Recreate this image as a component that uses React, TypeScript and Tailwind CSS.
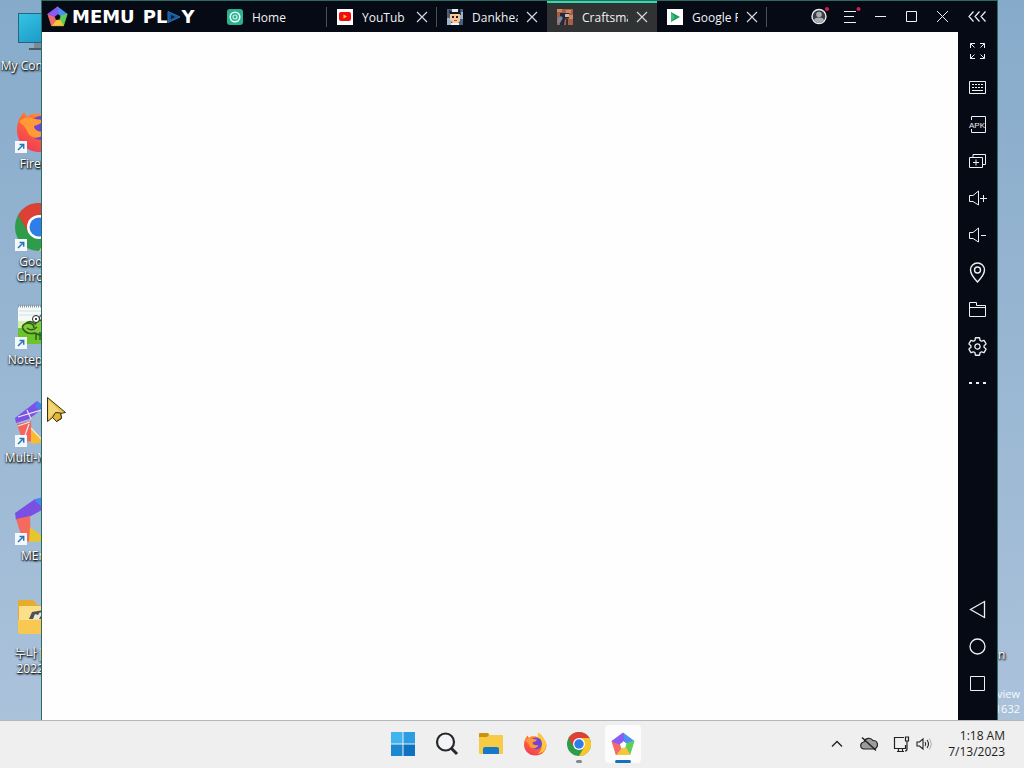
import type { ReactNode } from 'react';
import { IoSettingsOutline } from 'react-icons/io5';

const BLADES = [
  { points: '12,1 23,9.2 16,11.3 12.6,8.8', color: '#4a90f5' },
  { points: '23,9.2 18.8,22.5 14.8,16 16,11.3', color: '#5fcf5a' },
  { points: '18.8,22.5 5.2,22.5 9.8,16.6 14.8,16', color: '#f5c53c' },
  { points: '5.2,22.5 1,9.2 8.4,12 9.8,16.6', color: '#f26a6a' },
  { points: '1,9.2 12,1 12.6,8.8 8.4,12', color: '#8a5cf0' },
];

function MemuMark({ className }: { className: string }) {
  return (
    <svg viewBox="0 0 24 24" className={className} aria-hidden="true">
      {BLADES.map((b) => (
        <polygon key={b.color} points={b.points} fill={b.color} stroke={b.color} strokeWidth="1" strokeLinejoin="round" />
      ))}
    </svg>
  );
}

function ChromeMark({ className }: { className: string }) {
  return (
    <svg viewBox="0 0 48 48" className={className} aria-hidden="true">
      <circle cx="24" cy="24" r="24" fill="#2e9c4b" />
      <path d="M3.2 12A24 24 0 0 1 44.8 12H24L13.6 30Z" fill="#dd4034" />
      <path d="M44.8 12A24 24 0 0 1 24 48L34.4 30L24 12Z" fill="#fbc52c" />
      <circle cx="24" cy="24" r="12" fill="#fff" />
      <circle cx="24" cy="24" r="9.5" fill="#2f7de9" />
    </svg>
  );
}

function FirefoxMark({ className }: { className: string }) {
  return (
    <svg viewBox="0 0 48 48" className={className} aria-hidden="true">
      <defs>
        <linearGradient id="fox" x1="0.8" y1="0" x2="0.2" y2="1">
          <stop offset="0" stopColor="#ffb02e" />
          <stop offset="0.5" stopColor="#ff6a36" />
          <stop offset="1" stopColor="#f0355a" />
        </linearGradient>
      </defs>
      <path d="M30 1C37 6 40 10 42 15C45 18 47 22 47 27C46 39 37 47 25 47C11 47 2 37 2 25C2 17 5 12 9 7L12 12C15 9 18 8 21 9C24 8 28 9 32 12Z" fill="url(#fox)" />
      <path d="M30 1C37 6 40 10 42 15C46 19 47 24 46 29C44 39 36 43 30 43C38 37 40 27 34 18C31 13 28 8 30 1Z" fill="#ffc83a" />
      <circle cx="26" cy="23" r="12" fill="#7044d6" />
      <path d="M4 17C8 11 16 12 20 14L28 15C27 19 22 20 19 21C19 25 24 28 31 26C28 34 17 35 13 28C11 22 8 20 4 17Z" fill="#ff9a36" />
    </svg>
  );
}

function MonitorArt() {
  return (
    <svg viewBox="0 0 48 48" className="size-12" aria-hidden="true">
      <defs>
        <linearGradient id="screen" x1="0" y1="0" x2="1" y2="1">
          <stop offset="0" stopColor="#35c5e4" />
          <stop offset="1" stopColor="#168cc0" />
        </linearGradient>
      </defs>
      <rect x="3.5" y="6.5" width="42" height="29" fill="url(#screen)" stroke="#29637c" />
      <path d="M19 36h10v5H19z" fill="#7b8c98" />
      <path d="M14 41h20v2H14z" fill="#4a5a66" />
    </svg>
  );
}

function NotepadArt() {
  return (
    <svg viewBox="0 0 48 48" className="size-12" aria-hidden="true">
      <path d="M3 5h42v38H3z" fill="#f6faf6" />
      <path d="M3 27h42v16H3z" fill="#6dc42a" />
      <path d="M3 20h42v7H3z" fill="#d5edae" />
      <path d="M3 5h42" stroke="#8a9aa5" strokeWidth="3" strokeDasharray="1 1" />
      <path d="M4 10h40M4 14h40" stroke="#cfe0ea" />
      <path d="M10 23q5-5 10 0q4-6 12-4q10 4 5 12q-8 6-17 1q-8 2-12-4q-2-4 4-6q7 0 7 5" fill="#86c937" stroke="#2b5e1c" strokeWidth="1.6" />
      <path d="M12 27q5 4 10-1" fill="none" stroke="#2b5e1c" strokeWidth="1.4" />
      <circle cx="21" cy="18" r="3.5" fill="#fff" stroke="#222" />
      <circle cx="28" cy="17" r="3.5" fill="#fff" stroke="#222" />
      <circle cx="21" cy="18" r="1" />
      <circle cx="28" cy="17" r="1" />
      <path d="M21 32v7M25 31v8" stroke="#246418" strokeWidth="1.5" />
    </svg>
  );
}

function MultiArt() {
  return (
    <svg viewBox="0 0 48 48" className="size-12" aria-hidden="true">
      <path d="M0 19L22 2L27 10L14 20L1 24Z" fill="#7d50e6" />
      <path d="M22 2L46 18L38 20L20 8Z" fill="#4a7df0" />
      <path d="M2 25L16 22L17 42L8 43Z" fill="#f4645d" />
      <path d="M16 29L32 43L16 45Z" fill="#f7bd30" />
      <path d="M38 20L46 20L38 44L30 42Z" fill="#57c769" />
      <path d="M3 18L26 11M12 11l4 9M3 27l12-4M8 42l6-17M16 29l13 14" stroke="#e9eaf5" strokeWidth="1.2" />
    </svg>
  );
}

function MemuArt() {
  return (
    <svg viewBox="0 0 48 48" className="size-12" aria-hidden="true">
      <path d="M0 16L20 2L27 1L27 13L14 20L1 23Z" fill="#7a4fe4" />
      <path d="M19 3L27 0L47 17L38 20L26 9Z" fill="#3f8df4" />
      <path d="M1 22L15 19L16 45L8 44Z" fill="#f56a5f" />
      <path d="M15 30L34 44L14 45Z" fill="#e6c62f" />
      <path d="M38 20L47 18L39 44L30 42Z" fill="#57c769" />
    </svg>
  );
}

function FolderArt() {
  return (
    <svg viewBox="0 0 48 48" className="size-12" aria-hidden="true">
      <path d="M3 7q0-2 2-2h13l4 5h21v27H3z" fill="#e9ab2b" />
      <path d="M4 11h40v18H4z" fill="#fbe08c" />
      <path d="M3 25h41v12q0 2-2 2H5q-2 0-2-2z" fill="#f8c853" />
      <path d="M14 24l3-7 12-2v9H14z" fill="#50504e" />
      <path d="M18 24l2-5 3 1 2-3 2 2-3 5z" fill="#e8e6e0" />
    </svg>
  );
}

const SHORTCUTS: { label: string; art: ReactNode; link: boolean }[] = [
  { label: 'My Computer', art: <MonitorArt />, link: false },
  { label: 'Firefox', art: <FirefoxMark className="size-12" />, link: true },
  { label: 'Google\nChrome', art: <ChromeMark className="size-12" />, link: true },
  { label: 'Notepad++', art: <NotepadArt />, link: true },
  { label: 'Multi-MEmu', art: <MultiArt />, link: true },
  { label: 'MEmu', art: <MemuArt />, link: true },
  { label: '누나|U나\n2022-12', art: <FolderArt />, link: false },
];

function Shortcut({ label, art, link }: { label: string; art: ReactNode; link: boolean }) {
  return (
    <button type="button" className="flex h-[98px] w-[78px] shrink-0 flex-col items-center gap-[3px] pt-[7px]">
      <span className="relative size-12">
        {art}
        {link && (
          <svg viewBox="0 0 12 12" className="absolute bottom-0 left-0 size-3" aria-hidden="true">
            <path d="M0 0h12v12H0z" fill="#f4f8fb" />
            <path d="M3 9L8.500 3.500M4.500 3.500h4.200v4.200" fill="none" stroke="#2277b8" strokeWidth="1.500" />
          </svg>
        )}
      </span>
      <span className="text-center text-[12px] leading-[15px] whitespace-pre text-white [text-shadow:1px_1px_2px_#000,0_1px_2px_#000]">
        {label}
      </span>
    </button>
  );
}

const HomeIcon = (
  <svg viewBox="0 0 16 16" className="size-4 shrink-0" aria-hidden="true">
    <rect width="16" height="16" rx="3" fill="#2bb191" />
    <circle cx="8" cy="8" r="4.800" fill="none" stroke="#e9fff8" strokeWidth="1.600" />
    <circle cx="8" cy="8" r="2" fill="none" stroke="#c9f5e8" strokeWidth="1.200" />
  </svg>
);

const YouTubeIcon = (
  <svg viewBox="0 0 16 16" className="size-4 shrink-0" aria-hidden="true">
    <rect width="16" height="16" fill="#fff" />
    <rect x="2" y="3" width="12" height="9" rx="2" fill="#f30d0d" />
    <path d="M6.500 5.500v4l3.500-2z" fill="#ffd23a" />
  </svg>
);

const DankIcon = (
  <svg viewBox="0 0 16 16" className="size-4 shrink-0" aria-hidden="true">
    <rect width="16" height="16" fill="#47617f" />
    <path d="M0 9h4v7H0zM13 3h3v7h-3z" fill="#9db4c9" />
    <path d="M2 1l3 2 8-3 1 6H3z" fill="#141a22" />
    <path d="M5 0h6v3H5z" fill="#e8edf2" />
    <path d="M3 5h10v7l-3 3H7l-4-4z" fill="#f5c79a" />
    <path d="M5 7h2v2H5zM9 7h2v2H9z" fill="#2b1a14" />
    <path d="M7 11h3v1H7z" fill="#b24a3a" />
    <path d="M4 14h8v2H4z" fill="#f2f4f6" />
  </svg>
);

const CraftIcon = (
  <svg viewBox="0 0 16 16" className="size-4 shrink-0" aria-hidden="true">
    <rect width="16" height="16" fill="#a5604a" />
    <path d="M0 0h5v3H0zM9 1h5v3H9zM12 6h4v4h-4z" fill="#d08763" />
    <path d="M3 4h9v5l-4 1-1 6H3z" fill="#272936" />
    <path d="M1 9l3-2 2 2-3 5H0z" fill="#7288a5" />
    <path d="M8 5h4v3H8z" fill="#c9bcb5" />
    <path d="M9 10h2v6H9z" fill="#3b2c30" />
  </svg>
);

const PlayIcon = (
  <svg viewBox="0 0 16 16" className="size-4 shrink-0" aria-hidden="true">
    <rect width="16" height="16" fill="#fff" />
    <path d="M4 3v10l9-5z" fill="#1f9d5c" />
    <path d="M4 3v10l4-5z" fill="#35bd82" />
  </svg>
);

const TABS = [
  { title: 'Home', icon: HomeIcon, active: false, closable: false, rule: true },
  { title: 'YouTub', icon: YouTubeIcon, active: false, closable: true, rule: true },
  { title: 'Dankheads', icon: DankIcon, active: false, closable: true, rule: false },
  { title: 'Craftsman', icon: CraftIcon, active: true, closable: true, rule: false },
  { title: 'Google Play', icon: PlayIcon, active: false, closable: true, rule: true },
];

function Tab({ tab }: { tab: (typeof TABS)[number] }) {
  return (
    <div className={tab.active ? 'flex w-[110px] items-center border-t-2 border-[#35dba6] bg-[#303234] pb-px' : 'flex w-[110px] items-center pt-px'}>
      <button type="button" className="flex h-full flex-1 items-center gap-[9px] pl-[10px]">
        {tab.icon}
        <span className="w-[46px] overflow-hidden pt-0.5 text-left text-[12px] leading-4 whitespace-nowrap text-[#f0f2f4]">{tab.title}</span>
      </button>
      {tab.closable && (
        <button type="button" aria-label={`Close ${tab.title}`} className="mr-2 shrink-0">
          <svg viewBox="0 0 12 12" className="size-3" stroke="#d5d8dc" strokeWidth="1.200">
            <path d="M1 1l10 10M11 1L1 11" />
          </svg>
        </button>
      )}
      <span className={tab.rule ? 'h-5 w-px bg-[#4a4e55]' : 'h-5 w-px'} />
    </div>
  );
}

const CAPTION = [
  {
    name: 'Account',
    icon: (
      <>
        <circle cx="11" cy="10.500" r="7" fill="#3a3f46" stroke="#eceef0" strokeWidth="1.400" />
        <circle cx="11" cy="8.500" r="2.800" fill="#a9adb2" stroke="none" />
        <path d="M6 14.500q0-3 5-3t5 3q-2 2.500-5 2.500T6 14.500z" fill="#a9adb2" stroke="none" />
        <circle cx="19" cy="3" r="2" fill="#d01c4e" stroke="none" />
      </>
    ),
  },
  {
    name: 'Menu',
    icon: (
      <>
        <path d="M5 5.500h12M5 10.500h10M5 16.500h12" />
        <circle cx="19.500" cy="3" r="2" fill="#d01c4e" stroke="none" />
      </>
    ),
  },
  { name: 'Minimize', icon: <path d="M5 10.500h11" /> },
  { name: 'Maximize', icon: <path d="M5.500 5.500h10v10h-10z" /> },
  { name: 'Close', icon: <path d="M5 5l11 11M16 5L5 16" /> },
];

const TOOLS = [
  { name: 'Full screen', icon: <path d="M3.500 8V3.500H8M3.500 3.500l4 4M13 3.500h4.500V8M17.500 3.500l-4 4M3.500 14v4.500H8M3.500 18.500l4-4M13 18.500h4.500V14M17.500 18.500l-4-4" /> },
  {
    name: 'Keyboard',
    icon: (
      <>
        <path d="M2.500 4.500h16v12h-16zM5 13.500h11" />
        <path d="M5 7.500h11M5 10.500h11" strokeDasharray="2 1" />
      </>
    ),
  },
  {
    name: 'Install APK',
    icon: (
      <>
        <path d="M4.500 6V2.500h14v16h-14V15" />
        <text x="2" y="14" fontSize="8" fill="#eef0f2" stroke="none" className="font-['Liberation_Sans',sans-serif]">APK</text>
      </>
    ),
  },
  { name: 'Multi instance', icon: <path d="M2.500 6.500h13v10h-13zM6 6V3.500h12.500v10H16M9 8.500v6M6 11.500h6" /> },
  { name: 'Volume up', icon: <path d="M2.500 7.500H6l5.500-4.500v14L6 13.500H2.500zM13 10.500h7M16.500 7v7" /> },
  { name: 'Volume down', icon: <path d="M2.500 7.500H6l5.500-4.500v14L6 13.500H2.500zM14 10.500h5" /> },
  {
    name: 'Location',
    icon: (
      <>
        <path d="M10.500 20Q3.500 12.500 3.500 8A7 7 0 0 1 17.500 8Q17.500 12.500 10.500 20z" strokeWidth="1.400" />
        <circle cx="10.500" cy="8" r="3" strokeWidth="1.400" />
      </>
    ),
  },
  { name: 'Shared folder', icon: <path d="M2.500 17.500v-14h7v3h9v11zM2.500 8.500h16" /> },
  { name: 'Settings', icon: <IoSettingsOutline size={21} /> },
  { name: 'More', icon: <path d="M2 10h3M9 10h3M16 10h3" strokeWidth="2" /> },
];

const NAV = [
  { name: 'Back', icon: <path d="M17.500 2.500v16L3.500 10.500z" strokeWidth="1.300" /> },
  { name: 'Home screen', icon: <circle cx="10.500" cy="10.500" r="7.500" strokeWidth="1.300" /> },
  { name: 'Recent apps', icon: <path d="M3.500 3.500h14v14h-14z" /> },
];

function ToolButton({ name, icon }: { name: string; icon: ReactNode }) {
  return (
    <button type="button" aria-label={name} className="flex h-[37px] w-full items-center justify-center text-[#eef0f2]">
      <svg viewBox="0 0 21 21" className="size-[21px] overflow-visible" fill="none" stroke="currentColor" strokeWidth="1">
        {icon}
      </svg>
    </button>
  );
}

function EmulatorWindow() {
  return (
    <main className="flex min-w-0 flex-1 flex-col border-x border-[#2c6b64] bg-[#060a14]">
      <header className="flex h-8 shrink-0 border-t border-[#2c6b64]">
        <div className="flex w-[175px] shrink-0 items-center pl-[5px] font-['DejaVu_Sans',sans-serif] text-[18px] leading-none font-bold text-white">
          <MemuMark className="mr-1 size-[21px] shrink-0" />
          <span className="mr-2">MEMU</span>
          <span>PL</span>
          <svg viewBox="0 0 14 12" className="h-3 w-[14px] shrink-0" aria-hidden="true">
            <path d="M1 0.500v11L13 6z" fill="#17599a" stroke="#2676b8" />
            <path d="M4 4v4l4-2z" fill="#0a1830" />
          </svg>
          <span>Y</span>
        </div>
        {TABS.map((t) => (
          <Tab key={t.title} tab={t} />
        ))}
        <div className="ml-auto flex">
          {CAPTION.map((c) => (
            <button key={c.name} type="button" aria-label={c.name} className="flex w-[31px] items-center justify-center">
              <svg viewBox="0 0 21 21" className="size-[21px] overflow-visible" fill="none" stroke="#eef0f2" strokeWidth="1">
                {c.icon}
              </svg>
            </button>
          ))}
          <button type="button" aria-label="Collapse toolbar" className="flex w-[39px] items-center justify-center">
            <svg viewBox="0 0 19 11" className="h-[11px] w-[19px]" fill="none" stroke="#eef0f2" strokeWidth="1.200">
              <path d="M5.500 0.500l-4.500 5 4.500 5M11.500 0.500l-4.500 5 4.500 5M17.500 0.500l-4.500 5 4.500 5" />
            </svg>
          </button>
        </div>
      </header>

      <div className="flex min-h-0 flex-1">
        {/* guest screen */}
        <section className="relative flex-1 bg-[#fefefe]">
          <svg viewBox="0 0 20 28" className="absolute top-[364px] left-1 h-7 w-5" aria-hidden="true">
            <path d="M1.500 1.500v24l5-4 4 4 5-3-1-5 5-1z" fill="#e9c146" stroke="#3b2f14" strokeLinejoin="round" />
            <path d="M2.500 4v19l4-5 8-2z" fill="#f3d67a" />
            <path d="M6.500 21.500l3-5 5 0.500 1 5-5 3.500z" fill="#e3b63a" stroke="#3b2f14" />
          </svg>
        </section>
        <nav className="flex w-[39px] shrink-0 flex-col justify-between pb-[18px]">
          <div>
            {TOOLS.map((t) => (
              <ToolButton key={t.name} {...t} />
            ))}
          </div>
          <div>
            {NAV.map((t) => (
              <ToolButton key={t.name} {...t} />
            ))}
          </div>
        </nav>
      </div>
    </main>
  );
}

const PINNED = [
  {
    name: 'Start',
    icon: (
      <svg viewBox="0 0 24 24" className="size-6" aria-hidden="true">
        <path d="M0 0h11.500v11.500H0z" fill="#3fb4ee" />
        <path d="M12.500 0H24v11.500H12.500z" fill="#2c9de0" />
        <path d="M0 12.500h11.500V24H0z" fill="#1b88d2" />
        <path d="M12.500 12.500H24V24H12.500z" fill="#0f72c0" />
      </svg>
    ),
    active: false,
    mark: '',
  },
  {
    name: 'Search',
    icon: (
      <svg viewBox="0 0 24 24" className="size-6" fill="none" stroke="#26282b" aria-hidden="true">
        <circle cx="10.500" cy="10" r="8.500" fill="#f3f5f8" strokeWidth="2.200" />
        <path d="M16.500 16.500l5.500 5.500" strokeWidth="3" />
      </svg>
    ),
    active: false,
    mark: '',
  },
  {
    name: 'File Explorer',
    icon: (
      <svg viewBox="0 0 24 24" className="size-6" aria-hidden="true">
        <path d="M0 2q0-1 1-1h8l2 2h12q1 0 1 1v17q0 1-1 1H1q-1 0-1-1z" fill="#f8cb45" />
        <path d="M0 2q0-1 1-1h8l1 2-2 2H0z" fill="#c9920f" />
        <path d="M4 22v-5q0-2 2-2h12q2 0 2 2v5z" fill="#1678c8" />
      </svg>
    ),
    active: false,
    mark: '',
  },
  { name: 'Firefox', icon: <FirefoxMark className="size-6" />, active: false, mark: '' },
  { name: 'Chrome', icon: <ChromeMark className="size-6" />, active: false, mark: 'h-[3px] w-[6px] rounded-full bg-[#85878a]' },
  { name: 'MEmu', icon: <MemuMark className="size-6" />, active: true, mark: 'h-[3px] w-4 rounded-full bg-[#1a6fb8]' },
];

function Taskbar() {
  return (
    <footer className="grid h-12 shrink-0 grid-cols-[1fr_auto_1fr] border-t border-[#b4b8bd] bg-[#efefef]">
      <span />
      <div className="flex items-center pb-px pl-px">
        {PINNED.map((p) => (
          <div key={p.name} className="flex w-11 justify-center">
            <button
              type="button"
              aria-label={p.name}
              className={p.active ? 'relative flex h-[38px] w-9 items-center justify-center rounded bg-[#fcfcfc]' : 'relative flex h-[38px] w-9 items-center justify-center'}
            >
              {p.icon}
              {p.mark && (
                <span className="absolute inset-x-0 bottom-0 flex justify-center">
                  <span className={p.mark} />
                </span>
              )}
            </button>
          </div>
        ))}
      </div>
      <div className="flex items-center justify-end pr-[19px] pb-px text-[#1c1c1c]">
        <button type="button" aria-label="Show hidden icons" className="mr-[17px]">
          <svg viewBox="0 0 12 12" className="size-3" fill="none" stroke="#222" strokeWidth="1.300">
            <path d="M1 8.500l5-5 5 5" />
          </svg>
        </button>
        <button type="button" aria-label="OneDrive" className="mr-[15px]">
          <svg viewBox="0 0 18 16" className="h-4 w-[18px]" fill="#9b9c9e" stroke="#222" strokeWidth="1.200">
            <path d="M4.500 13a3.500 3.500 0 0 1-.5-7A5 5 0 0 1 13 4.500a4 4 0 0 1 .5 8.500z" />
            <path d="M2 1.500l14 13" strokeWidth="1.500" />
          </svg>
        </button>
        <button type="button" aria-label="Network" className="mr-[6px]">
          <svg viewBox="0 0 17 17" className="size-[17px]" fill="none" stroke="#222" strokeWidth="1.200">
            <path d="M11 1.500H1.500v11h11V9M4 15.500h7M5.500 13v2M9.500 13v2M12.500 1h3v4h-3zM14 5v8q0 2-2 2" />
          </svg>
        </button>
        <button type="button" aria-label="Volume" className="mr-4">
          <svg viewBox="0 0 16 14" className="h-[14px] w-4" fill="none" stroke="#222" strokeWidth="1.100">
            <path d="M1 5h2.500L7 2v10L3.500 9H1zM9 5q1.500 2 0 4M11 3q3 4 0 8" />
            <path d="M13 1.500q4.500 5.500 0 11" stroke="#b4b4b4" />
          </svg>
        </button>
        <button type="button" className="text-right text-[12px] leading-4">
          <time className="block">1:18 AM</time>
          <time className="block">7/13/2023</time>
        </button>
      </div>
    </footer>
  );
}

export default function App() {
  return (
    <div className="flex h-screen flex-col overflow-hidden font-['Open_Sans','Noto_Sans_CJK_KR',sans-serif]">
      <div className="flex min-h-0 flex-1 bg-linear-to-b from-[#86abca] to-[#abc2db]">
        <aside className="flex w-[41px] shrink-0 flex-col overflow-hidden">
          {SHORTCUTS.map((s) => (
            <Shortcut key={s.label} {...s} />
          ))}
        </aside>
        <EmulatorWindow />
        <aside className="flex w-[26px] shrink-0 flex-col justify-end overflow-hidden pr-1 pb-1 text-[11px] leading-[15px] text-white">
          <span className="mb-6 text-[12px] [text-shadow:1px_1px_2px_#000,0_1px_2px_#000]">n</span>
          <span className="flex justify-end text-white/90">view</span>
          <span className="flex justify-end text-white/90">1632</span>
        </aside>
      </div>
      <Taskbar />
    </div>
  );
}
